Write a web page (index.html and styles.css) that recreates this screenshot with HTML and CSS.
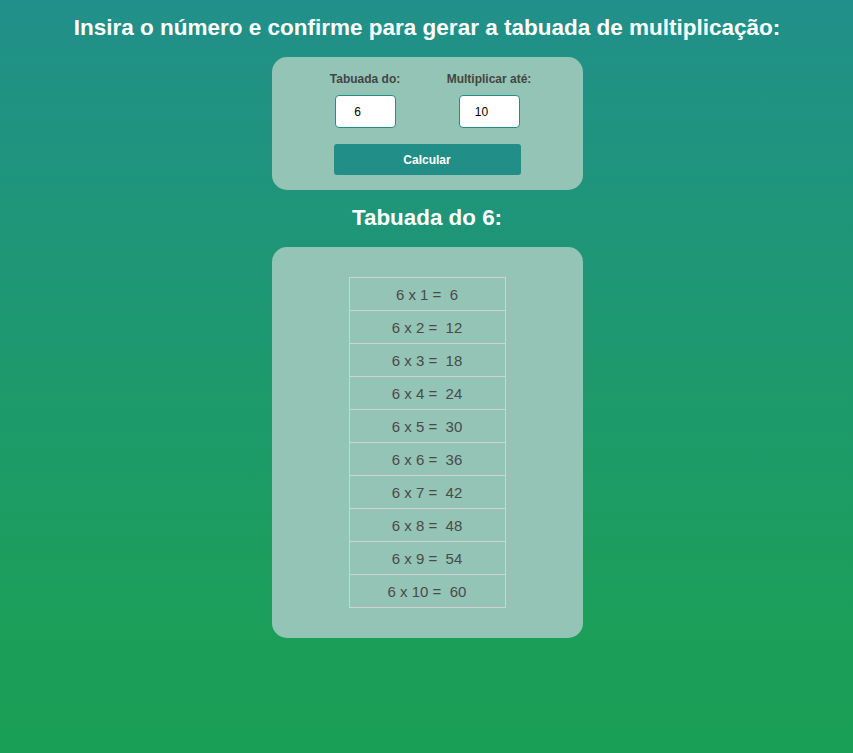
FILE: index.html
```html
<!DOCTYPE html>
<html lang="pt-BR">
<head>
<meta charset="utf-8">
<title>Tabuada</title>
<link rel="stylesheet" href="styles.css">
</head>
<body>
<h1 class="title">Insira o número e confirme para gerar a tabuada de multiplicação:</h1>
<div class="card form-card">
  <div class="fields">
    <div class="field">
      <label class="label" for="num">Tabuada do:</label>
      <input class="input" id="num" type="text" value="6">
    </div>
    <div class="field">
      <label class="label" for="ate">Multiplicar até:</label>
      <input class="input" id="ate" type="text" value="10">
    </div>
  </div>
  <button class="btn">Calcular</button>
</div>
<h2 class="subtitle">Tabuada do 6:</h2>
<div class="card table-card">
  <table class="tab">
    <tr><td>6 x 1 = &nbsp;6</td></tr>
    <tr><td>6 x 2 = &nbsp;12</td></tr>
    <tr><td>6 x 3 = &nbsp;18</td></tr>
    <tr><td>6 x 4 = &nbsp;24</td></tr>
    <tr><td>6 x 5 = &nbsp;30</td></tr>
    <tr><td>6 x 6 = &nbsp;36</td></tr>
    <tr><td>6 x 7 = &nbsp;42</td></tr>
    <tr><td>6 x 8 = &nbsp;48</td></tr>
    <tr><td>6 x 9 = &nbsp;54</td></tr>
    <tr><td>6 x 10 = &nbsp;60</td></tr>
  </table>
</div>
</body>
</html>
```
FILE: styles.css
```css
html, body {
  margin: 0;
  padding: 0;
}
body {
  min-height: 753px;
  padding-left: 1px;
  box-sizing: border-box;
  background: linear-gradient(to bottom, #21908a 0%, #1b9f58 85%, #1a9f57 100%);
  font-family: "Liberation Sans", Arial, sans-serif;
  display: flex;
  flex-direction: column;
  align-items: center;
}
.title {
  color: #fff;
  font-size: 22.5px;
  font-weight: bold;
  margin: 15px 0 0;
  line-height: 26px;
  text-align: center;
}
.card {
  background: #93c4b5;
  border-radius: 15px;
  width: 311px;
  box-sizing: border-box;
}
.form-card {
  margin-top: 16px;
  padding: 15px 0 15px;
  height: 133px;
  display: flex;
  flex-direction: column;
  align-items: center;
}
.fields {
  display: flex;
  gap: 24px;
}
.field {
  width: 100px;
  display: flex;
  flex-direction: column;
  align-items: center;
}
.label {
  font-size: 12px;
  font-weight: bold;
  color: #444;
  line-height: 14px;
  margin-bottom: 9px;
}
.input {
  width: 61px;
  height: 33px;
  box-sizing: border-box;
  border: 1px solid #228e88;
  border-radius: 4px;
  background: #fff;
  font-family: "Liberation Sans", Arial, sans-serif;
  font-size: 12px;
  color: #000;
  text-align: center;
  padding: 0 15px 0 0;
  margin: 0;
  outline: none;
}
.btn {
  margin-top: 16px;
  width: 187px;
  height: 31px;
  background: #228e88;
  color: #fff;
  border: none;
  border-radius: 3px;
  font-family: "Liberation Sans", Arial, sans-serif;
  font-size: 12px;
  font-weight: bold;
  cursor: pointer;
}
.subtitle {
  color: #fff;
  font-size: 22.4px;
  font-weight: bold;
  margin: 16px 0 0;
  line-height: 24px;
}
.table-card {
  margin-top: 17px;
  padding: 30px 0;
  display: flex;
  justify-content: center;
}
.tab {
  border-collapse: collapse;
  width: 157px;
}
.tab td {
  border: 1px solid #d2d2d2;
  height: 33px;
  box-sizing: border-box;
  padding: 0;
  text-align: center;
  font-size: 15px;
  color: #4a4a4a;
}
```
